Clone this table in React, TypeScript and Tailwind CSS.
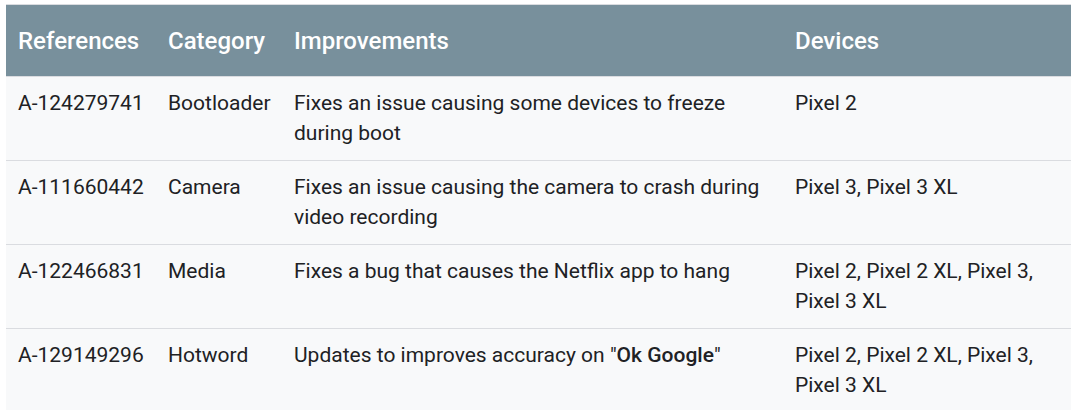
const rows = [
  {
    ref: 'A-124279741',
    category: 'Bootloader',
    improvement: <>Fixes an issue causing some devices to freeze during boot</>,
    devices: 'Pixel 2',
  },
  {
    ref: 'A-111660442',
    category: 'Camera',
    improvement: <>Fixes an issue causing the camera to crash during video recording</>,
    devices: 'Pixel 3, Pixel 3 XL',
  },
  {
    ref: 'A-122466831',
    category: 'Media',
    improvement: <>Fixes a bug that causes the Netflix app to hang</>,
    devices: 'Pixel 2, Pixel 2 XL, Pixel 3, Pixel 3 XL',
  },
  {
    ref: 'A-129149296',
    category: 'Hotword',
    improvement: (
      <>
        Updates to improves accuracy on "<strong className="font-medium">Ok Google</strong>"
      </>
    ),
    devices: 'Pixel 2, Pixel 2 XL, Pixel 3, Pixel 3 XL',
  },
];

export default function App() {
  return (
    <div className="min-h-screen bg-white pt-1 pl-[6px] font-['Roboto',sans-serif]">
      <table className="w-[1080px] table-fixed border-collapse border-t border-[#dadce0] text-left">
        <colgroup>
          <col className="w-[150px]" />
          <col className="w-[126px]" />
          <col className="w-[501px]" />
          <col />
        </colgroup>
        <thead>
          <tr className="h-[72px] bg-[#78909c] text-[24px] font-medium text-white">
            <th className="px-3 font-medium">References</th>
            <th className="px-3 font-medium">Category</th>
            <th className="px-3 font-medium">Improvements</th>
            <th className="px-3 font-medium">Devices</th>
          </tr>
        </thead>
        <tbody className="bg-[#f8f9fa] text-[21px] leading-[30px] text-[#202124]">
          {rows.map((r) => (
            <tr key={r.ref} className="border-t border-[#dadce0] align-top">
              <td className="px-3 pt-[11px] pb-[12px]">{r.ref}</td>
              <td className="px-3 pt-[11px] pb-[12px]">{r.category}</td>
              <td className="px-3 pt-[11px] pb-[12px]">{r.improvement}</td>
              <td className="px-3 pt-[11px] pb-[12px] pr-[40px]">{r.devices}</td>
            </tr>
          ))}
        </tbody>
      </table>
    </div>
  );
}
